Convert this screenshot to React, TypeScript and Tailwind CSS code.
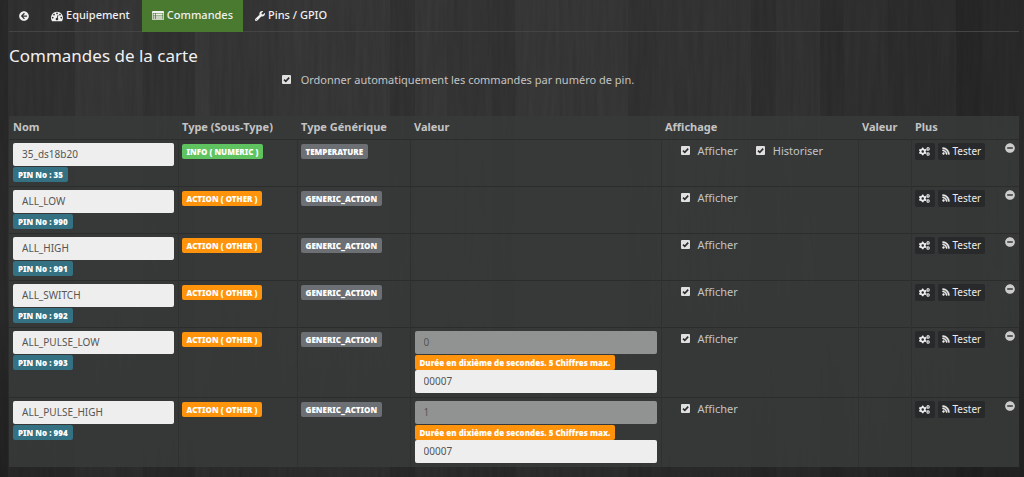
import { useState } from 'react';
import type { ReactNode } from 'react';
import { FaArrowCircleLeft, FaCogs, FaMinusCircle, FaRss, FaWrench } from 'react-icons/fa';
import clsx from 'clsx';

type Command = {
  id: string;
  name: string;
  pin: string;
  type: 'info' | 'action';
  subType: string;
  generic: string;
  historize?: boolean;
  value?: string;
  duration?: string;
};

const COMMANDS: Command[] = [
  { id: 'ds18b20', name: '35_ds18b20', pin: '35', type: 'info', subType: 'NUMERIC', generic: 'TEMPERATURE', historize: true },
  { id: 'low', name: 'ALL_LOW', pin: '990', type: 'action', subType: 'OTHER', generic: 'GENERIC_ACTION' },
  { id: 'high', name: 'ALL_HIGH', pin: '991', type: 'action', subType: 'OTHER', generic: 'GENERIC_ACTION' },
  { id: 'switch', name: 'ALL_SWITCH', pin: '992', type: 'action', subType: 'OTHER', generic: 'GENERIC_ACTION' },
  { id: 'pulse-low', name: 'ALL_PULSE_LOW', pin: '993', type: 'action', subType: 'OTHER', generic: 'GENERIC_ACTION', value: '0', duration: '00007' },
  { id: 'pulse-high', name: 'ALL_PULSE_HIGH', pin: '994', type: 'action', subType: 'OTHER', generic: 'GENERIC_ACTION', value: '1', duration: '00007' },
];

// left edge, width and shade of each wood plank, repeated every 1024px
const PLANKS: [number, number, string][] = [
  [0, 8, '#2a2a2a'], [8, 67, '#323232'], [75, 68, '#383838'], [143, 52, '#333333'], [195, 15, '#3a3a3a'],
  [210, 68, '#373737'], [278, 62, '#393939'], [340, 50, '#393939'], [390, 25, '#333333'], [415, 32, '#393939'],
  [447, 45, '#363636'], [492, 23, '#333333'], [515, 45, '#393939'], [560, 68, '#383838'], [628, 24, '#333333'],
  [652, 99, '#353535'], [751, 25, '#303030'], [776, 44, '#343434'], [820, 24, '#2e2e2e'], [844, 44, '#313131'],
  [888, 68, '#2e2e2e'], [956, 26, '#282828'], [982, 42, '#2b2b2b'],
];

function WoodBackground() {
  return (
    <svg className="absolute inset-0 h-full w-full" aria-hidden="true">
      <defs>
        <pattern id="planks" width="1024" height="1000" patternUnits="userSpaceOnUse">
          {PLANKS.map(([x, width, fill]) => (
            <rect key={x} x={x} y="0" width={width} height="1000" fill={fill} />
          ))}
        </pattern>
        <filter id="grain" x="0" y="0" width="100%" height="100%">
          <feTurbulence type="fractalNoise" baseFrequency="0.22 0.014" numOctaves="3" seed="4" />
          <feColorMatrix values="0 0 0 0 0  0 0 0 0 0  0 0 0 0 0  1 0 0 0 -0.2" />
        </filter>
        <linearGradient id="shade" x2="0" y2="1">
          <stop offset="0.6" stopOpacity="0" />
          <stop offset="1" stopOpacity="0.2" />
        </linearGradient>
      </defs>
      <rect width="100%" height="100%" fill="url(#planks)" />
      <rect width="100%" height="100%" filter="url(#grain)" opacity="0.16" />
      <rect width="100%" height="100%" fill="url(#shade)" />
    </svg>
  );
}

function DashboardIcon() {
  return (
    <svg viewBox="0 0 1792 1792" width="12" height="12" className="shrink-0" aria-hidden="true">
      <path
        fill="currentColor"
        d="M384 1152q0-53-37.5-90.5t-90.5-37.5-90.5 37.5-37.5 90.5 37.5 90.5 90.5 37.5 90.5-37.5 37.5-90.5zm192-448q0-53-37.5-90.5t-90.5-37.5-90.5 37.5-37.5 90.5 37.5 90.5 90.5 37.5 90.5-37.5 37.5-90.5zm428 481l101-382q6-26-7.5-48.5t-38.5-29.5-48 6.5-30 39.5l-101 382q-60 5-107 43.5t-63 98.5q-20 77 20 146t117 89 146-20 89-117q16-60-6-117t-72-91zm660-33q0-53-37.5-90.5t-90.5-37.5-90.5 37.5-37.5 90.5 37.5 90.5 90.5 37.5 90.5-37.5 37.5-90.5zm-640-640q0-53-37.5-90.5t-90.5-37.5-90.5 37.5-37.5 90.5 37.5 90.5 90.5 37.5 90.5-37.5 37.5-90.5zm448 192q0-53-37.5-90.5t-90.5-37.5-90.5 37.5-37.5 90.5 37.5 90.5 90.5 37.5 90.5-37.5 37.5-90.5zm320 448q0 261-141 483-19 29-54 29h-1402q-35 0-54-29-141-221-141-483 0-182 71-348t191-286 286-191 348-71 348 71 286 191 191 286 71 348z"
      />
    </svg>
  );
}

function ListAltIcon() {
  return (
    <svg viewBox="0 0 24 18" width="12" height="9" className="shrink-0" aria-hidden="true">
      <path
        fill="currentColor"
        fillRule="evenodd"
        d="M2 0h20a2 2 0 0 1 2 2v14a2 2 0 0 1-2 2H2a2 2 0 0 1-2-2V2a2 2 0 0 1 2-2zM1.5 4v12.5h21V4z"
      />
      <path fill="currentColor" d="M3 5h3v2.8H3zM7.5 5h13.5v2.8H7.5zM3 8.8h3v2.8H3zM7.5 8.8h13.5v2.8H7.5zM3 12.6h3v2.8H3zM7.5 12.6h13.5v2.8H7.5z" />
    </svg>
  );
}

function Tab({ active, label, children }: { active?: boolean; label?: string; children: ReactNode }) {
  return (
    <li>
      <a
        href="#"
        className={clsx('flex h-8 items-center gap-[3px] px-2.5 pb-px text-[11px] font-medium text-[#f0f0f0]', active && 'bg-[#4a7a2f]')}
      >
        {children}
        {label}
      </a>
    </li>
  );
}

function Badge({ className, children }: { className: string; children: ReactNode }) {
  return (
    <span className={clsx('block w-fit rounded-xs px-[5px] text-[8px] font-black leading-[15px] whitespace-nowrap text-white', className)}>
      {children}
    </span>
  );
}

function Check({ label, className = 'gap-2' }: { label: string; className?: string }) {
  return (
    <label className={clsx('flex items-start text-[11px] leading-4 whitespace-nowrap', className)}>
      <span className="relative mt-[3px] block size-[9px]">
        <input type="checkbox" defaultChecked className="peer block size-[9px] appearance-none rounded-[1px] bg-[#e0e0e0]" />
        <svg viewBox="0 0 9 9" className="pointer-events-none absolute inset-0 hidden peer-checked:block" aria-hidden="true">
          <path d="M2 4.6l1.8 1.8L7.2 2.6" fill="none" stroke="#2c2c2c" strokeWidth="1.6" />
        </svg>
      </span>
      {label}
    </label>
  );
}

const inputClass = 'block h-[23px] w-full rounded-xs px-[9px] text-[10px] text-[#555]';

function CommandRow({ cmd, onRemove }: { cmd: Command; onRemove: () => void }) {
  return (
    <tr className="border-t border-[#2b2d2c] align-top">
      <td className="px-1 pt-[3px] pb-1">
        <input aria-label="Nom" defaultValue={cmd.name} className={clsx(inputClass, 'bg-[#eeeeee]')} />
        <Badge className="mt-px bg-[#337183]">PIN No : {cmd.pin}</Badge>
      </td>
      <td className="border-l border-[#2f3130] pt-1 pl-[3px]">
        <Badge className={cmd.type === 'info' ? 'bg-[#5fc45f]' : 'bg-[#ff930b]'}>
          {cmd.type === 'info' ? 'INFO' : 'ACTION'} ( {cmd.subType} )
        </Badge>
      </td>
      <td className="border-l border-[#2f3130] pt-1 pl-[3px]">
        <Badge className="bg-[#6c6f73]">{cmd.generic}</Badge>
      </td>
      <td className="border-l border-[#2f3130] px-1 pt-[3px] pb-1">
        {cmd.duration && (
          <>
            <input aria-label="Valeur" defaultValue={cmd.value} disabled className={clsx(inputClass, 'bg-[#919392]')} />
            <label className="mt-px block">
              <Badge className="bg-[#ff930b]">Durée en dixième de secondes. 5 Chiffres max.</Badge>
              <input defaultValue={cmd.duration} maxLength={5} className={clsx(inputClass, 'bg-[#eeeeee]')} />
            </label>
          </>
        )}
      </td>
      <td className="border-l border-[#2f3130] pt-[3px] pl-[19px]">
        <div className="flex gap-[18px]">
          <Check label="Afficher" />
          {cmd.historize && <Check label="Historiser" />}
        </div>
      </td>
      <td className="border-l border-[#2f3130]" />
      <td className="border-l border-[#2f3130] pt-[3px] pr-1 pl-[3px]">
        <div className="flex items-start gap-[3px]">
          <button type="button" aria-label="Configurer" className="flex h-[17px] w-5 items-center justify-center rounded-xs bg-[#28292b] text-[#ececec]">
            <FaCogs size={11} />
          </button>
          <button type="button" className="flex h-[17px] items-center gap-[3px] rounded-xs bg-[#28292b] px-1 text-[10px] text-[#ececec]">
            <FaRss size={8} strokeWidth={30} />
            Tester
          </button>
          <button type="button" aria-label="Supprimer" onClick={onRemove} className="ml-auto text-[#cccccc]">
            <FaMinusCircle size={10} />
          </button>
        </div>
      </td>
    </tr>
  );
}

export default function App() {
  const [commands, setCommands] = useState(COMMANDS);

  return (
    <div className="relative min-h-screen bg-[#2c2c2c] font-['Noto_Sans','Open_Sans',sans-serif] text-[#c4c4c4]">
      <WoodBackground />
      <div className="relative pr-[5px] pl-[9px]">
        {/* Tabs */}
        <nav className="border-b border-[#444444]">
          <ul className="-mb-px flex h-8 gap-0.5">
            <Tab><FaArrowCircleLeft size={10} aria-label="Retour" /></Tab>
            <Tab label="Equipement"><DashboardIcon /></Tab>
            <Tab active label="Commandes"><ListAltIcon /></Tab>
            <Tab label="Pins / GPIO"><FaWrench size={10} /></Tab>
          </ul>
        </nav>

        <h1 className="mt-3 text-[17px] leading-6 text-[#f0f0f0]">Commandes de la carte</h1>
        <div className="mt-1 mb-7 ml-[27%]">
          <Check className="gap-2.5" label="Ordonner automatiquement les commandes par numéro de pin." />
        </div>

        {/* Commands */}
        <table className="w-full table-fixed border-collapse bg-[#373938]/90 text-left">
          <colgroup>
            <col className="w-[169px]" />
            <col className="w-[119px]" />
            <col className="w-[113px]" />
            <col />
            <col className="w-[197px]" />
            <col className="w-[53px]" />
            <col className="w-[108px]" />
          </colgroup>
          <thead>
            <tr className="h-[23px] text-[11px] leading-4 whitespace-nowrap">
              {['Nom', 'Type (Sous-Type)', 'Type Générique', 'Valeur', 'Affichage', 'Valeur', 'Plus'].map((title, i) => (
                <th key={i} className="px-1 font-bold">{title}</th>
              ))}
            </tr>
          </thead>
          <tbody>
            {commands.map(cmd => (
              <CommandRow key={cmd.id} cmd={cmd} onRemove={() => setCommands(commands.filter(c => c.id !== cmd.id))} />
            ))}
          </tbody>
        </table>
      </div>
    </div>
  );
}
